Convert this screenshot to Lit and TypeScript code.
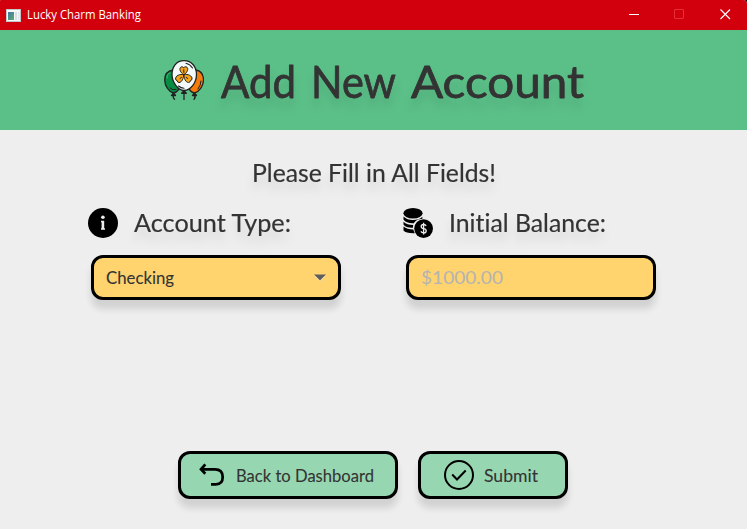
import { LitElement, html, css, svg } from "lit";
import { customElement, property } from "lit/decorators.js";

/** One line of text set to an exact width, with its baseline at a known height. */
@customElement("fit-text")
class FitText extends LitElement {
  @property() text = "";
  @property({ type: Number }) width = 100;
  @property({ type: Number }) height = 30;
  @property({ type: Number }) baseline = 20;
  @property({ type: Number }) size = 16;

  static styles = css`
    :host { display: block; flex: none; }
    svg { display: block; overflow: visible; }
    text { fill: currentColor; stroke: currentColor; stroke-width: var(--weight, 0.1px); stroke-linejoin: round; font-variant-ligatures: none; }
  `;

  render() {
    return html`<svg width=${this.width} height=${this.height}>
      <text x="0" y=${this.baseline} font-size=${this.size} textLength=${this.width} lengthAdjust="spacingAndGlyphs">${this.text}</text>
    </svg>`;
  }
}

const balloons = svg`
  <g stroke="#222" stroke-width="1.3" stroke-linejoin="round" stroke-linecap="round">
    <path d="M9.5 33 L7.5 35.5 H11.5 Z M9.5 35.5 Q8.5 37.5 10.5 39.3 M30.5 33 L28.5 35.5 H32.5 Z M30.5 35.5 Q32 37.5 30 39.3" fill="#222"/>
    <path d="M9 10 C3 11 .7 15 .7 20 C.7 26 5 32 9.5 33 C13 32.5 15 30 16 26 Z" fill="#078c43"/>
    <path d="M32 10 C37 11 39.5 15 39.5 20 C39.5 26 35 32 30.5 33 C27 32.5 25 30 24 26 Z" fill="#f57c0c"/>
    <path d="M3 18 Q3 14 6 13" fill="none" stroke="#32b36b"/>
    <path d="M6 28 Q9 31 12 29.5 M34 29 Q37 25 37 21" fill="none" stroke-width="1"/>
    <path d="M20 .7 C12 .7 8 7 8 14.5 C8 22.5 14 30 20 30.5 C27 30 32.5 22.5 32.5 14.5 C32.5 7 28 .7 20 .7 Z" fill="#f3f8f8"/>
    <path d="M22 3.2 Q26 4 28.5 8 M14.5 26 Q17 28 20 28.3" fill="none" stroke-width="1.1"/>
    <path d="M20 30.7 L17.7 33.3 H22.3 Z M20 33.3 V39.5" fill="#222"/>
    <path d="M19.8 14.7 C15 12 15 7 17.8 6.8 Q19 6.7 19.8 7.8 Q20.6 6.7 21.8 6.8 C24.7 7 24.5 12 19.8 14.7 C24 13.5 28.5 16 28 19 Q27.7 20.5 26.4 20.6 Q26.4 22.4 24.5 22.5 C21.5 22.5 20 18 19.8 14.7 C19.5 18 18 22.5 15 22.5 Q13.2 22.4 13.2 20.6 Q11.8 20.5 11.6 19 C11.3 16 15.5 13.5 19.8 14.7 Z" fill="#f5a31a" stroke-width="1"/>
    <path d="M19.8 9.7 V12.5 M16 18.5 L17.5 17.4 M23.7 18.5 L22.2 17.4" fill="none" stroke-width="1"/>
  </g>`;

const info = svg`
  <circle cx="15" cy="15" r="15"/>
  <circle cx="14.9" cy="9.3" r="1.8" fill="#eee"/>
  <path d="M13 12.8 H16.2 V20.3 H17 V21.8 H13 V20.3 H13.6 V14.2 H13 Z" fill="#eee"/>`;

const coins = svg`
  <ellipse cx="10" cy="5.2" rx="9.6" ry="5.2"/>
  <path d="M.5 8.5 Q4 12 10 12 Q16 12 19.4 8.8 V10.7 Q13 11 10.8 15.2 Q3.2 15.5 .5 11.5 Z"/>
  <path d="M.5 13.7 Q4 17 10.2 17 L9.9 19.7 Q3 20 .5 16.5 Z M.5 18.6 Q4 21.5 10.2 21.6 L11.8 25.2 Q3 25.5 .5 22.5 Z"/>
  <circle cx="20.6" cy="20.6" r="9.4"/>
  <path d="M23.2 17.8 Q22.4 16.5 20.6 16.5 Q18.2 16.5 18.2 18.5 Q18.2 20.2 20.6 20.6 Q23.2 21 23.2 22.9 Q23.2 24.8 20.6 24.8 Q18.6 24.8 17.9 23.4 M20.6 14.8 V26.4" fill="none" stroke="#eee" stroke-width="1.3"/>`;

@customElement("app-root")
class AppRoot extends LitElement {
  static styles = css`
    :host { display: block; width: 747px; height: 529px; background: #000; color: #333; font-family: Lato, "Open Sans", sans-serif; }
    * { box-sizing: border-box; }
    svg { display: block; flex: none; }
    .window { display: flex; flex-direction: column; height: 100%; background: #eee; border-radius: 1px 4px 0 0; overflow: hidden; }
    .titlebar { display: flex; align-items: center; height: 30px; padding-left: 6px; background: #d2000d; color: #fff; font-family: "Open Sans", sans-serif; --weight: 0px; }
    .titlebar fit-text { margin-left: 6px; }
    .controls { margin-left: auto; }
    .banner { display: flex; height: 100px; padding: 30px 0 0 164px; gap: 17px; background: #5bc088; }
    .title { display: flex; gap: 15px; --weight: 0.8px; }
    .shadowed { filter: drop-shadow(0 9px 4px rgba(0, 0, 0, 0.09)); }
    .content { display: flex; flex-direction: column; flex: 1; padding-top: 25px; }
    .notice { margin-left: 252px; --weight: 0.2px; }
    .fields { display: flex; gap: 62px; padding-left: 88px; margin-top: 13px; }
    .field { width: 253px; }
    .label { display: flex; gap: 16px; height: 47px; --weight: 0.2px; }
    .control, .button { border: 3px solid #000; box-shadow: 0 9px 7px rgba(0, 0, 0, 0.12); display: flex; }
    .control { width: 250px; height: 45px; margin-left: 3px; padding: 0 12px; border-radius: 12px; background: #ffd36e; align-items: center; justify-content: space-between; }
    .placeholder { color: #b3b3b3; --weight: 0px; }
    .actions { display: flex; gap: 20px; margin: auto 0 30px 178px; }
    .button { height: 48px; border-radius: 12px; background: #96d7b2; align-items: center; }
    .back { width: 220px; padding-left: 18px; gap: 11px; }
    .submit { width: 150px; padding-left: 23px; gap: 10px; }
  `;

  render() {
    return html`<div class="window">
      <div class="titlebar">
        <svg width="15" height="13">
          <defs><linearGradient id="pane" x1="0" y1="0" x2="1" y2="1"><stop stop-color="#4773a7"/><stop offset="1" stop-color="#58b06c"/></linearGradient></defs>
          <path d="M0 0 H15 V13 H0 Z" fill="#c3c7ca"/><path d="M1 1 H14 V12 H1 Z" fill="#f7f8f8"/>
          <path d="M2 3 H8 V11 H2 Z" fill="url(#pane)"/><path d="M9 3 H11 V11 H9 Z" fill="#d7dfe8"/><path d="M12 3 H13.5 V11 H12 Z" fill="#e3e5e6"/>
        </svg>
        <fit-text text="Lucky Charm Banking" .width=${114} .height=${30} .baseline=${19} .size=${12}></fit-text>
        <svg class="controls" width="118" height="30" fill="none">
          <path d="M0 14.5 H10" stroke="#fff"/>
          <rect x="45.5" y="9.5" width="9" height="9" rx=".5" stroke="#e5303b"/>
          <path d="M91.5 9.5 L101 19 M101 9.5 L91.5 19" stroke="#fff" stroke-width="1.1"/>
        </svg>
      </div>
      <div class="banner">
        <svg width="40" height="40">${balloons}</svg>
        <div class="title shadowed">
          <fit-text text="Add" .width=${75} .height=${50} .baseline=${37.5} .size=${45}></fit-text>
          <fit-text text="New" .width=${85} .height=${50} .baseline=${37.5} .size=${45}></fit-text>
          <fit-text text="Account" .width=${173} .height=${50} .baseline=${37.5} .size=${45}></fit-text>
        </div>
      </div>
      <div class="content">
        <fit-text class="notice shadowed" text="Please Fill in All Fields!" .width=${244} .height=${40} .baseline=${27} .size=${24.5}></fit-text>
        <div class="fields">
          <div class="field">
            <div class="label">
              <svg width="30" height="30">${info}</svg>
              <fit-text class="shadowed" text="Account Type:" .width=${157} .height=${36} .baseline=${24} .size=${24.5}></fit-text>
            </div>
            <div class="control">
              <fit-text text="Checking" .width=${68} .height=${39} .baseline=${26} .size=${17.5}></fit-text>
              <svg width="12" height="8"><path d="M0 1.5 H12 L6 7.5 Z" fill="#fff" opacity=".5"/><path d="M0 .5 H12 L6 6.5 Z" fill="#5e5e5e"/></svg>
            </div>
          </div>
          <div class="field">
            <div class="label">
              <svg width="30" height="30">${coins}</svg>
              <fit-text class="shadowed" text="Initial Balance:" .width=${157} .height=${36} .baseline=${24} .size=${24.5}></fit-text>
            </div>
            <div class="control placeholder">
              <fit-text text="$1000.00" .width=${82} .height=${39} .baseline=${26} .size=${18}></fit-text>
            </div>
          </div>
        </div>
        <div class="actions">
          <div class="button back">
            <svg width="26" height="24" fill="none" stroke="#000" stroke-width="2.7"><path d="M2 6.3 H16 C21 6.3 23.7 9 23.7 14 C23.7 19 21 21.3 17 21.3 H12"/><path d="M6.3 1.3 L2 6.3 L6.3 10.7"/></svg>
            <fit-text text="Back to Dashboard" .width=${138} .height=${42} .baseline=${28} .size=${17.5}></fit-text>
          </div>
          <div class="button submit">
            <svg width="30" height="30" fill="none" stroke="#000" stroke-width="2"><circle cx="15" cy="15" r="14"/><path d="M8.2 14.5 L13 19.5 L21.7 10.5"/></svg>
            <fit-text text="Submit" .width=${54} .height=${42} .baseline=${28} .size=${17.5}></fit-text>
          </div>
        </div>
      </div>
    </div>`;
  }
}
